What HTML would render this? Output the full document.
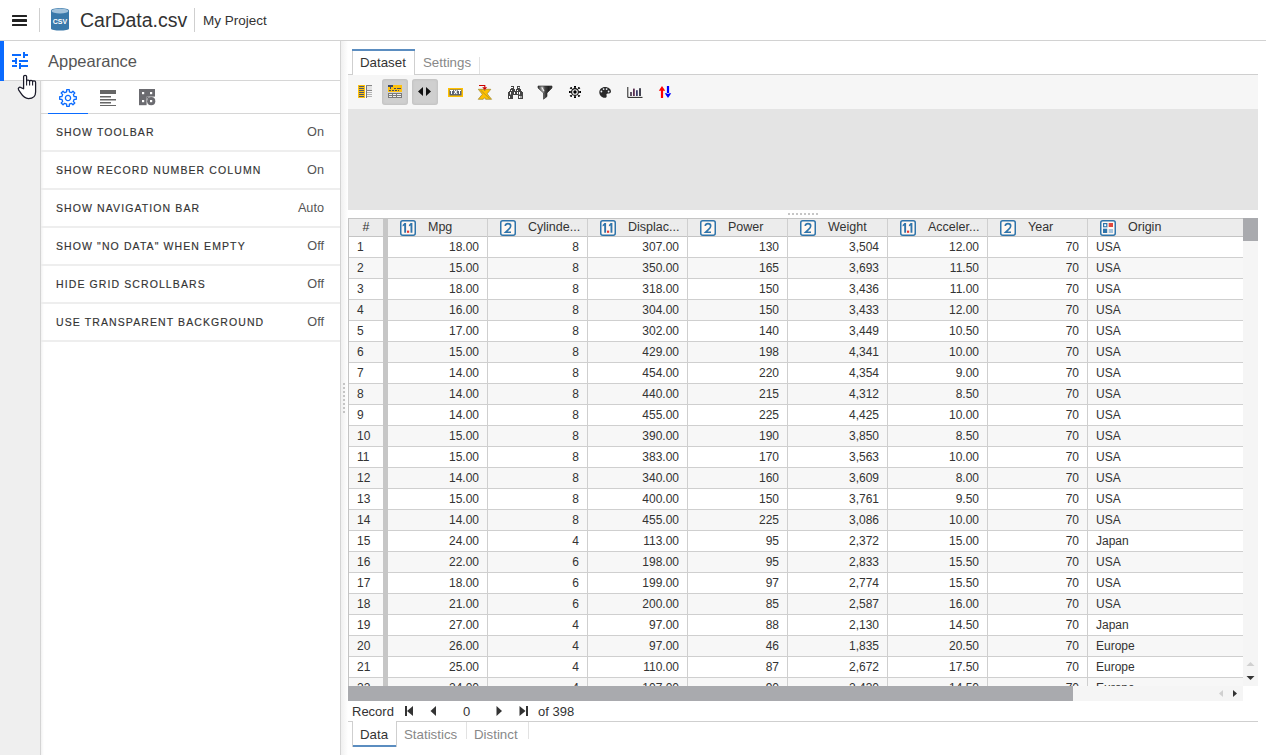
<!DOCTYPE html>
<html><head><meta charset="utf-8">
<style>
*{box-sizing:border-box;margin:0;padding:0}
html,body{width:1266px;height:755px;overflow:hidden;background:#fff;font-family:"Liberation Sans",sans-serif;color:#333}
.abs{position:absolute}
.ham{left:12px;height:2.4px;width:15px;background:#222;border-radius:0.5px}
.vsep{width:1px;background:#cfcfcf}
#title{left:80px;top:8px;font-size:19.5px;line-height:24px;color:#333;white-space:nowrap}
#proj{left:203px;top:13px;font-size:13.5px;line-height:16px;color:#333;white-space:nowrap}
#apptitle{left:48px;top:51px;font-size:16.5px;line-height:20px;color:#555;white-space:nowrap}
.hline{height:1px;background:#d6d6d6}
.srow{left:41px;width:299px;height:38px;border-bottom:2px solid #eeeeee}
.slab{position:absolute;left:15px;top:11px;font-size:10.5px;line-height:14px;letter-spacing:1.1px;color:#333;white-space:nowrap;-webkit-text-stroke:0.15px #333}
.sval{position:absolute;right:16px;top:11px;font-size:12.7px;line-height:15px;color:#555}
.tb{position:absolute;top:79px;width:26px;height:26px}
.tb.on{background:#cfcfcf;border-radius:3px;box-shadow:inset 0 0 3px rgba(0,0,0,.12)}
.tb svg{position:absolute;left:0;top:0}
.hl{left:349px;width:894px;height:1px;background:#cfcfcf}
.cn{left:357px;font-size:12px;line-height:20px;height:20px;color:#333}
.cr{width:91px;text-align:right;font-size:12px;line-height:20px;height:20px;color:#333;white-space:nowrap}
.cl{left:1096px;font-size:12px;line-height:20px;height:20px;color:#333;white-space:nowrap}
.hd{top:219px;font-size:12.5px;line-height:17px;color:#333;white-space:nowrap}
.nav{top:704px;font-size:13px;line-height:16px;color:#333;white-space:nowrap}
</style></head><body>
<!-- header -->
<div class="abs" style="left:0;top:40px;width:1266px;height:1px;background:#d2d2d2"></div>
<div class="abs ham" style="top:15px"></div>
<div class="abs ham" style="top:19.4px"></div>
<div class="abs ham" style="top:24px"></div>
<div class="abs vsep" style="left:39px;top:8px;height:24px"></div>
<svg class="abs" style="left:50px;top:8px" width="20" height="24" viewBox="0 0 20 24">
<path d="M1 2.8 C1 -0.8,19 -0.8,19 2.8 V20.5 C19 23.2,1 23.2,1 20.5Z" fill="#3a79aa"/>
<ellipse cx="10" cy="3" rx="8.4" ry="2.4" fill="#a3c3dc"/>
<text x="10" y="16" font-family="Liberation Sans" font-size="7" font-weight="bold" fill="#fff" text-anchor="middle">CSV</text>
</svg>
<div id="title" class="abs">CarData.csv</div>
<div class="abs vsep" style="left:194px;top:8px;height:24px"></div>
<div id="proj" class="abs">My Project</div>

<!-- left rail -->
<div class="abs" style="left:0;top:81px;width:40px;height:674px;background:#efefef"></div>
<svg class="abs" style="left:0;top:41px" width="40" height="40" viewBox="0 0 40 40">
<g fill="#0a6bff">
<rect x="12" y="13" width="9" height="2"/><rect x="23" y="11" width="2" height="6"/><rect x="25" y="13" width="3" height="2"/>
<rect x="12" y="19" width="3" height="2"/><rect x="15" y="17" width="2" height="6"/><rect x="19" y="19" width="9" height="2"/>
<rect x="12" y="24" width="5" height="2"/><rect x="19" y="22" width="2" height="6"/><rect x="19" y="24" width="9" height="2"/>
</g></svg>

<!-- panel -->
<div class="abs" style="left:40px;top:81px;width:1px;height:674px;background:#d4d4d4"></div>
<div class="abs" style="left:41px;top:81px;width:3px;height:674px;background:linear-gradient(to right,rgba(0,0,0,.05),rgba(0,0,0,0))"></div>
<div id="apptitle" class="abs">Appearance</div>
<div class="abs hline" style="left:0;top:80px;width:340px"></div>
<div class="abs" style="left:0;top:41px;width:4px;height:40px;background:#0a6bff"></div>
<div class="abs hline" style="left:41px;top:113px;width:299px"></div>
<div class="abs" style="left:48px;top:112.6px;width:40px;height:1.5px;background:#0a6bff"></div>
<!-- panel tab icons -->
<svg class="abs" style="left:58px;top:88px" width="20" height="20" viewBox="-10 -10 20 20">
<path fill="none" stroke="#0a6bff" stroke-width="1.3" stroke-linejoin="round" d="M-1.37 -6.15 L-1.31 -8.30 L1.31 -8.30 L1.37 -6.15 L3.38 -5.32 L4.94 -6.80 L6.80 -4.94 L5.32 -3.38 L6.15 -1.37 L8.30 -1.31 L8.30 1.31 L6.15 1.37 L5.32 3.38 L6.80 4.94 L4.94 6.80 L3.38 5.32 L1.37 6.15 L1.31 8.30 L-1.31 8.30 L-1.37 6.15 L-3.38 5.32 L-4.94 6.80 L-6.80 4.94 L-5.32 3.38 L-6.15 1.37 L-8.30 1.31 L-8.30 -1.31 L-6.15 -1.37 L-5.32 -3.38 L-6.80 -4.94 L-4.94 -6.80 L-3.38 -5.32Z"/>
<circle cx="0" cy="0" r="2.6" fill="none" stroke="#0a6bff" stroke-width="1.3"/>
</svg>
<svg class="abs" style="left:100px;top:90px" width="16" height="16" viewBox="0 0 16 16">
<g fill="#666"><rect x="0" y="0" width="16" height="4"/><rect x="0" y="6" width="11" height="1.5"/><rect x="0" y="9" width="16" height="1.5"/><rect x="0" y="12" width="11" height="1.5"/><rect x="0" y="15" width="16" height="1.5"/></g>
</svg>
<svg class="abs" style="left:139px;top:89px" width="17" height="17" viewBox="0 0 17 17">
<g fill="#6b6b70"><rect x="0" y="0" width="16" height="7.6"/><rect x="0" y="0" width="7.6" height="16.2"/><circle cx="12.2" cy="12.2" r="4.1"/><rect x="7.6" y="7.6" width="2" height="2"/></g>
<g fill="#fff"><rect x="3" y="3" width="2.2" height="2.2"/><rect x="11" y="3" width="2.2" height="2.2"/><rect x="3" y="11" width="2.2" height="2.2"/><rect x="11" y="11" width="2.2" height="2.2"/></g>
</svg>

<div class="abs srow" style="top:114px"><span class="slab">SHOW TOOLBAR</span><span class="sval">On</span></div>
<div class="abs srow" style="top:152px"><span class="slab">SHOW RECORD NUMBER COLUMN</span><span class="sval">On</span></div>
<div class="abs srow" style="top:190px"><span class="slab">SHOW NAVIGATION BAR</span><span class="sval">Auto</span></div>
<div class="abs srow" style="top:228px"><span class="slab">SHOW "NO DATA" WHEN EMPTY</span><span class="sval">Off</span></div>
<div class="abs srow" style="top:266px"><span class="slab">HIDE GRID SCROLLBARS</span><span class="sval">Off</span></div>
<div class="abs srow" style="top:304px"><span class="slab">USE TRANSPARENT BACKGROUND</span><span class="sval">Off</span></div>

<!-- splitter -->
<div class="abs" style="left:340px;top:41px;width:1px;height:714px;background:#d4d4d4"></div>
<div class="abs" style="left:341px;top:41px;width:7px;height:714px;background:linear-gradient(to right,#f0f0f0,#fff)"></div>
<svg class="abs" style="left:343px;top:383px" width="2" height="32"><g fill="#c4c4c4"><rect y="0" width="2" height="2"/><rect y="4" width="2" height="2"/><rect y="8" width="2" height="2"/><rect y="12" width="2" height="2"/><rect y="16" width="2" height="2"/><rect y="20" width="2" height="2"/><rect y="24" width="2" height="2"/><rect y="28" width="2" height="2"/></g></svg>

<!-- right tabs -->
<div class="abs" style="left:348px;top:74px;width:910px;height:1px;background:#cfcfcf"></div>
<div class="abs" style="left:352px;top:49px;width:63px;height:26px;background:#fff;border-left:1px solid #cfcfcf;border-right:1px solid #cfcfcf"></div>
<div class="abs" style="left:352px;top:49px;width:63px;height:2px;background:#5b8dc0"></div>
<div class="abs" style="left:360px;top:55px;font-size:13.3px;line-height:16px;color:#333">Dataset</div>
<div class="abs" style="left:423px;top:55px;font-size:13.3px;line-height:16px;color:#888">Settings</div>
<div class="abs" style="left:479px;top:57px;width:1px;height:17px;background:#e2e2e2"></div>

<!-- toolbar -->
<div class="abs" style="left:348px;top:75px;width:910px;height:34px;background:#f6f6f6"></div>
<div class="abs" style="left:348px;top:109px;width:910px;height:101px;background:#e4e4e4"></div>
<div class="tb on" style="left:382px"></div>
<div class="tb on" style="left:412px"></div>
<svg class="abs" style="left:348px;top:75px" width="340" height="34" viewBox="348 75 340 34" shape-rendering="crispEdges">
<rect x="358" y="85" width="7" height="13" fill="#ffc20e"/>
<rect x="359" y="86" width="5" height="1" fill="#4b5770"/>
<rect x="359" y="88" width="5" height="1" fill="#4b5770"/>
<rect x="359" y="90" width="5" height="1" fill="#4b5770"/>
<rect x="359" y="92" width="5" height="1" fill="#4b5770"/>
<rect x="359" y="94" width="5" height="1" fill="#4b5770"/>
<rect x="359" y="96" width="5" height="1" fill="#4b5770"/>
<rect x="367" y="86" width="5" height="4" fill="#e2e2e2"/>
<rect x="366" y="85" width="1" height="13" fill="#777"/>
<rect x="366" y="85" width="6" height="1" fill="#888"/>
<rect x="366" y="90" width="6" height="1" fill="#888"/>
<rect x="367" y="92" width="5" height="1" fill="#b4b4b4"/>
<rect x="367" y="94" width="5" height="1" fill="#b4b4b4"/>
<rect x="367" y="96" width="5" height="1" fill="#b4b4b4"/>
<rect x="388" y="85" width="14" height="7" fill="#ffc20e"/>
<rect x="388" y="85" width="5" height="1.5" fill="#3f4a66"/><rect x="389.5" y="85" width="1.5" height="4" fill="#3f4a66"/>
<rect x="394" y="88" width="2" height="1" fill="#3f4a66"/>
<rect x="397" y="88" width="4" height="1" fill="#3f4a66"/>
<rect x="389" y="90" width="2" height="1" fill="#3f4a66"/>
<rect x="392" y="90" width="1.5" height="1" fill="#3f4a66"/>
<rect x="394.5" y="90" width="2" height="1" fill="#3f4a66"/>
<rect x="398" y="90" width="1" height="1" fill="#3f4a66"/>
<rect x="388" y="93" width="14" height="5" fill="#7a7a7a"/>
<rect x="389" y="94" width="3" height="1" fill="#eee"/>
<rect x="393" y="94" width="3" height="1" fill="#eee"/>
<rect x="397" y="94" width="4" height="1" fill="#eee"/>
<rect x="389" y="96" width="3" height="1" fill="#eee"/>
<rect x="393" y="96" width="3" height="1" fill="#eee"/>
<rect x="397" y="96" width="4" height="1" fill="#eee"/>
</svg>
<svg class="abs" style="left:348px;top:75px" width="340" height="34" viewBox="348 75 340 34">
<path d="M423 87 V96 L418 91.5Z M426 87 V96 L431 91.5Z" fill="#111"/>
<rect x="448" y="88" width="15" height="9" fill="#ffc000"/><rect x="449.5" y="89.5" width="12" height="6" fill="#5b6270"/>
<g fill="#fff" shape-rendering="crispEdges"><rect x="450" y="90" width="3.4" height="1.2"/><rect x="451.1" y="90" width="1.3" height="4"/><rect x="457.6" y="90" width="3.4" height="1.2"/><rect x="458.7" y="90" width="1.3" height="4"/></g><path d="M454.2 90.1 L457.2 94 M457.2 90.1 L454.2 94" stroke="#fff" stroke-width="1.1"/>
<path d="M478.3 89.3 H484 L484.7 91 L485.5 89.3 H490.8 L487.2 93.8 L491.6 99.3 H485.6 L484.6 97.6 L483.2 99.3 H478.2 L482.3 94.3 Z" fill="#ffc000" stroke="#9a8530" stroke-width="0.7"/>
<path d="M480.6 90.2 L489.6 98.6" stroke="#9a8530" stroke-width="0.7"/>
<path d="M479 85.5 H484.8 V87.5" fill="none" stroke="#cc0000" stroke-width="1.1"/><path d="M482.2 87.3 H487.2 L484.7 90Z" fill="#cc0000"/>
<g fill="#454545" shape-rendering="crispEdges"><rect x="511" y="86" width="3" height="3"/><rect x="517" y="86" width="3" height="3"/><rect x="510" y="89" width="5" height="3"/><rect x="516" y="89" width="5" height="3"/><rect x="508" y="92" width="5" height="7"/><rect x="518" y="92" width="5" height="7"/><rect x="509" y="91" width="1" height="1"/><rect x="521" y="91" width="1" height="1"/><rect x="513" y="91" width="5" height="4"/></g>
<g fill="#fff" shape-rendering="crispEdges"><rect x="512" y="87" width="1" height="1"/><rect x="518" y="87" width="1" height="1"/><rect x="511" y="90" width="1" height="1"/><rect x="517" y="90" width="1" height="1"/><rect x="510" y="92" width="1" height="2"/><rect x="517" y="92" width="1" height="2"/><rect x="514" y="92" width="1" height="2"/><rect x="509" y="96" width="1" height="2"/><rect x="519" y="96" width="1" height="2"/></g>
<g fill="#fff"><rect x="511" y="87" width="1" height="1"/><rect x="518.5" y="87" width="1" height="1"/><rect x="510" y="92" width="1" height="2.5"/><rect x="519" y="92" width="1" height="2.5"/><rect x="509" y="96" width="1" height="2"/><rect x="520.5" y="96" width="1" height="2"/></g>
<defs><linearGradient id="fg" x1="0" x2="1"><stop offset="0" stop-color="#333"/><stop offset="0.3" stop-color="#aaa"/><stop offset="0.5" stop-color="#444"/><stop offset="0.75" stop-color="#222"/><stop offset="1" stop-color="#444"/></linearGradient></defs>
<path d="M538 86 H552 V88 L547 93 V96.5 L543.5 99.2 V93 L538 88Z" fill="url(#fg)" stroke="#222" stroke-width="0.6"/><path d="M541.3 87.4 L543.6 91.6 L544.5 91 L542.6 87.4Z" fill="#f4f4f4"/>
<g transform="translate(575 92)" fill="#000"><circle r="3.4" fill="none" stroke="#000" stroke-width="1.1"/><circle r="1.7"/><rect x="-1" y="-6" width="2" height="1.8"/><rect x="-1" y="4.2" width="2" height="1.8"/><rect x="-6" y="-1" width="1.8" height="2"/><rect x="4.2" y="-1" width="1.8" height="2"/><path d="M-3.8 -4.8 L-3.1 -3.8 L-3.8 -3.1 L-4.8 -3.8 Z M3.8 -4.8 L3.1 -3.8 L3.8 -3.1 L4.8 -3.8 Z M-3.8 4.8 L-3.1 3.8 L-3.8 3.1 L-4.8 3.8 Z M3.8 4.8 L3.1 3.8 L3.8 3.1 L4.8 3.8 Z" stroke="#000" stroke-width="0.9" stroke-linejoin="round"/></g>
<path d="M605 87 C608.6 87 611 89.2 611 91.5 C611 93.3 609.3 93.6 607.8 93.6 C606.6 93.6 606.2 94.4 606.6 95.4 C607 96.8 606.2 97.8 604.8 97.8 C601.6 97.8 599.3 95.2 599.3 92.3 C599.3 89.3 601.8 87 605 87Z" fill="#2a2a2a"/>
<g fill="#f0f4fa"><circle cx="601.4" cy="91.5" r="0.9"/><circle cx="603.6" cy="89.1" r="0.9"/><circle cx="606.6" cy="89.1" r="0.9"/><circle cx="608.6" cy="91.5" r="0.9"/></g>
<path d="M627.8 87 V97.4 H642.5" fill="none" stroke="#222" stroke-width="1"/>
<rect x="630.2" y="92" width="1.6" height="4" fill="#3a2a40"/><rect x="633.1" y="88.6" width="1.6" height="7.4" fill="#4a1a40"/><rect x="636.1" y="90.2" width="1.6" height="5.8" fill="#2a2a5a"/><rect x="639.2" y="88.2" width="1.6" height="7.8" fill="#1a1a2a"/>
<path d="M660.9 90 H663.1 V98 H660.9Z M658.8 90.8 L662 86 L665.2 90.8Z" fill="#ff0000"/>
<path d="M666.9 86 H669.1 V94 H666.9Z M664.8 93.2 L668 98 L671.2 93.2Z" fill="#0000ff"/>
</svg>

<div class="abs" style="left:349px;top:219px;width:894px;height:17px;background:#ececec"></div>
<div class="abs" style="left:349px;top:237px;width:894px;height:20px;background:#fff"></div>
<div class="abs hl" style="top:257px"></div>
<div class="abs cn" style="top:237px">1</div>
<div class="abs cr" style="top:237px;left:388px">18.00</div>
<div class="abs cr" style="top:237px;left:488px">8</div>
<div class="abs cr" style="top:237px;left:588px">307.00</div>
<div class="abs cr" style="top:237px;left:688px">130</div>
<div class="abs cr" style="top:237px;left:788px">3,504</div>
<div class="abs cr" style="top:237px;left:888px">12.00</div>
<div class="abs cr" style="top:237px;left:988px">70</div>
<div class="abs cl" style="top:237px;left:1096px">USA</div>
<div class="abs" style="left:349px;top:258px;width:894px;height:20px;background:#f7f7f7"></div>
<div class="abs hl" style="top:278px"></div>
<div class="abs cn" style="top:258px">2</div>
<div class="abs cr" style="top:258px;left:388px">15.00</div>
<div class="abs cr" style="top:258px;left:488px">8</div>
<div class="abs cr" style="top:258px;left:588px">350.00</div>
<div class="abs cr" style="top:258px;left:688px">165</div>
<div class="abs cr" style="top:258px;left:788px">3,693</div>
<div class="abs cr" style="top:258px;left:888px">11.50</div>
<div class="abs cr" style="top:258px;left:988px">70</div>
<div class="abs cl" style="top:258px;left:1096px">USA</div>
<div class="abs" style="left:349px;top:279px;width:894px;height:20px;background:#fff"></div>
<div class="abs hl" style="top:299px"></div>
<div class="abs cn" style="top:279px">3</div>
<div class="abs cr" style="top:279px;left:388px">18.00</div>
<div class="abs cr" style="top:279px;left:488px">8</div>
<div class="abs cr" style="top:279px;left:588px">318.00</div>
<div class="abs cr" style="top:279px;left:688px">150</div>
<div class="abs cr" style="top:279px;left:788px">3,436</div>
<div class="abs cr" style="top:279px;left:888px">11.00</div>
<div class="abs cr" style="top:279px;left:988px">70</div>
<div class="abs cl" style="top:279px;left:1096px">USA</div>
<div class="abs" style="left:349px;top:300px;width:894px;height:20px;background:#f7f7f7"></div>
<div class="abs hl" style="top:320px"></div>
<div class="abs cn" style="top:300px">4</div>
<div class="abs cr" style="top:300px;left:388px">16.00</div>
<div class="abs cr" style="top:300px;left:488px">8</div>
<div class="abs cr" style="top:300px;left:588px">304.00</div>
<div class="abs cr" style="top:300px;left:688px">150</div>
<div class="abs cr" style="top:300px;left:788px">3,433</div>
<div class="abs cr" style="top:300px;left:888px">12.00</div>
<div class="abs cr" style="top:300px;left:988px">70</div>
<div class="abs cl" style="top:300px;left:1096px">USA</div>
<div class="abs" style="left:349px;top:321px;width:894px;height:20px;background:#fff"></div>
<div class="abs hl" style="top:341px"></div>
<div class="abs cn" style="top:321px">5</div>
<div class="abs cr" style="top:321px;left:388px">17.00</div>
<div class="abs cr" style="top:321px;left:488px">8</div>
<div class="abs cr" style="top:321px;left:588px">302.00</div>
<div class="abs cr" style="top:321px;left:688px">140</div>
<div class="abs cr" style="top:321px;left:788px">3,449</div>
<div class="abs cr" style="top:321px;left:888px">10.50</div>
<div class="abs cr" style="top:321px;left:988px">70</div>
<div class="abs cl" style="top:321px;left:1096px">USA</div>
<div class="abs" style="left:349px;top:342px;width:894px;height:20px;background:#f7f7f7"></div>
<div class="abs hl" style="top:362px"></div>
<div class="abs cn" style="top:342px">6</div>
<div class="abs cr" style="top:342px;left:388px">15.00</div>
<div class="abs cr" style="top:342px;left:488px">8</div>
<div class="abs cr" style="top:342px;left:588px">429.00</div>
<div class="abs cr" style="top:342px;left:688px">198</div>
<div class="abs cr" style="top:342px;left:788px">4,341</div>
<div class="abs cr" style="top:342px;left:888px">10.00</div>
<div class="abs cr" style="top:342px;left:988px">70</div>
<div class="abs cl" style="top:342px;left:1096px">USA</div>
<div class="abs" style="left:349px;top:363px;width:894px;height:20px;background:#fff"></div>
<div class="abs hl" style="top:383px"></div>
<div class="abs cn" style="top:363px">7</div>
<div class="abs cr" style="top:363px;left:388px">14.00</div>
<div class="abs cr" style="top:363px;left:488px">8</div>
<div class="abs cr" style="top:363px;left:588px">454.00</div>
<div class="abs cr" style="top:363px;left:688px">220</div>
<div class="abs cr" style="top:363px;left:788px">4,354</div>
<div class="abs cr" style="top:363px;left:888px">9.00</div>
<div class="abs cr" style="top:363px;left:988px">70</div>
<div class="abs cl" style="top:363px;left:1096px">USA</div>
<div class="abs" style="left:349px;top:384px;width:894px;height:20px;background:#f7f7f7"></div>
<div class="abs hl" style="top:404px"></div>
<div class="abs cn" style="top:384px">8</div>
<div class="abs cr" style="top:384px;left:388px">14.00</div>
<div class="abs cr" style="top:384px;left:488px">8</div>
<div class="abs cr" style="top:384px;left:588px">440.00</div>
<div class="abs cr" style="top:384px;left:688px">215</div>
<div class="abs cr" style="top:384px;left:788px">4,312</div>
<div class="abs cr" style="top:384px;left:888px">8.50</div>
<div class="abs cr" style="top:384px;left:988px">70</div>
<div class="abs cl" style="top:384px;left:1096px">USA</div>
<div class="abs" style="left:349px;top:405px;width:894px;height:20px;background:#fff"></div>
<div class="abs hl" style="top:425px"></div>
<div class="abs cn" style="top:405px">9</div>
<div class="abs cr" style="top:405px;left:388px">14.00</div>
<div class="abs cr" style="top:405px;left:488px">8</div>
<div class="abs cr" style="top:405px;left:588px">455.00</div>
<div class="abs cr" style="top:405px;left:688px">225</div>
<div class="abs cr" style="top:405px;left:788px">4,425</div>
<div class="abs cr" style="top:405px;left:888px">10.00</div>
<div class="abs cr" style="top:405px;left:988px">70</div>
<div class="abs cl" style="top:405px;left:1096px">USA</div>
<div class="abs" style="left:349px;top:426px;width:894px;height:20px;background:#f7f7f7"></div>
<div class="abs hl" style="top:446px"></div>
<div class="abs cn" style="top:426px">10</div>
<div class="abs cr" style="top:426px;left:388px">15.00</div>
<div class="abs cr" style="top:426px;left:488px">8</div>
<div class="abs cr" style="top:426px;left:588px">390.00</div>
<div class="abs cr" style="top:426px;left:688px">190</div>
<div class="abs cr" style="top:426px;left:788px">3,850</div>
<div class="abs cr" style="top:426px;left:888px">8.50</div>
<div class="abs cr" style="top:426px;left:988px">70</div>
<div class="abs cl" style="top:426px;left:1096px">USA</div>
<div class="abs" style="left:349px;top:447px;width:894px;height:20px;background:#fff"></div>
<div class="abs hl" style="top:467px"></div>
<div class="abs cn" style="top:447px">11</div>
<div class="abs cr" style="top:447px;left:388px">15.00</div>
<div class="abs cr" style="top:447px;left:488px">8</div>
<div class="abs cr" style="top:447px;left:588px">383.00</div>
<div class="abs cr" style="top:447px;left:688px">170</div>
<div class="abs cr" style="top:447px;left:788px">3,563</div>
<div class="abs cr" style="top:447px;left:888px">10.00</div>
<div class="abs cr" style="top:447px;left:988px">70</div>
<div class="abs cl" style="top:447px;left:1096px">USA</div>
<div class="abs" style="left:349px;top:468px;width:894px;height:20px;background:#f7f7f7"></div>
<div class="abs hl" style="top:488px"></div>
<div class="abs cn" style="top:468px">12</div>
<div class="abs cr" style="top:468px;left:388px">14.00</div>
<div class="abs cr" style="top:468px;left:488px">8</div>
<div class="abs cr" style="top:468px;left:588px">340.00</div>
<div class="abs cr" style="top:468px;left:688px">160</div>
<div class="abs cr" style="top:468px;left:788px">3,609</div>
<div class="abs cr" style="top:468px;left:888px">8.00</div>
<div class="abs cr" style="top:468px;left:988px">70</div>
<div class="abs cl" style="top:468px;left:1096px">USA</div>
<div class="abs" style="left:349px;top:489px;width:894px;height:20px;background:#fff"></div>
<div class="abs hl" style="top:509px"></div>
<div class="abs cn" style="top:489px">13</div>
<div class="abs cr" style="top:489px;left:388px">15.00</div>
<div class="abs cr" style="top:489px;left:488px">8</div>
<div class="abs cr" style="top:489px;left:588px">400.00</div>
<div class="abs cr" style="top:489px;left:688px">150</div>
<div class="abs cr" style="top:489px;left:788px">3,761</div>
<div class="abs cr" style="top:489px;left:888px">9.50</div>
<div class="abs cr" style="top:489px;left:988px">70</div>
<div class="abs cl" style="top:489px;left:1096px">USA</div>
<div class="abs" style="left:349px;top:510px;width:894px;height:20px;background:#f7f7f7"></div>
<div class="abs hl" style="top:530px"></div>
<div class="abs cn" style="top:510px">14</div>
<div class="abs cr" style="top:510px;left:388px">14.00</div>
<div class="abs cr" style="top:510px;left:488px">8</div>
<div class="abs cr" style="top:510px;left:588px">455.00</div>
<div class="abs cr" style="top:510px;left:688px">225</div>
<div class="abs cr" style="top:510px;left:788px">3,086</div>
<div class="abs cr" style="top:510px;left:888px">10.00</div>
<div class="abs cr" style="top:510px;left:988px">70</div>
<div class="abs cl" style="top:510px;left:1096px">USA</div>
<div class="abs" style="left:349px;top:531px;width:894px;height:20px;background:#fff"></div>
<div class="abs hl" style="top:551px"></div>
<div class="abs cn" style="top:531px">15</div>
<div class="abs cr" style="top:531px;left:388px">24.00</div>
<div class="abs cr" style="top:531px;left:488px">4</div>
<div class="abs cr" style="top:531px;left:588px">113.00</div>
<div class="abs cr" style="top:531px;left:688px">95</div>
<div class="abs cr" style="top:531px;left:788px">2,372</div>
<div class="abs cr" style="top:531px;left:888px">15.00</div>
<div class="abs cr" style="top:531px;left:988px">70</div>
<div class="abs cl" style="top:531px;left:1096px">Japan</div>
<div class="abs" style="left:349px;top:552px;width:894px;height:20px;background:#f7f7f7"></div>
<div class="abs hl" style="top:572px"></div>
<div class="abs cn" style="top:552px">16</div>
<div class="abs cr" style="top:552px;left:388px">22.00</div>
<div class="abs cr" style="top:552px;left:488px">6</div>
<div class="abs cr" style="top:552px;left:588px">198.00</div>
<div class="abs cr" style="top:552px;left:688px">95</div>
<div class="abs cr" style="top:552px;left:788px">2,833</div>
<div class="abs cr" style="top:552px;left:888px">15.50</div>
<div class="abs cr" style="top:552px;left:988px">70</div>
<div class="abs cl" style="top:552px;left:1096px">USA</div>
<div class="abs" style="left:349px;top:573px;width:894px;height:20px;background:#fff"></div>
<div class="abs hl" style="top:593px"></div>
<div class="abs cn" style="top:573px">17</div>
<div class="abs cr" style="top:573px;left:388px">18.00</div>
<div class="abs cr" style="top:573px;left:488px">6</div>
<div class="abs cr" style="top:573px;left:588px">199.00</div>
<div class="abs cr" style="top:573px;left:688px">97</div>
<div class="abs cr" style="top:573px;left:788px">2,774</div>
<div class="abs cr" style="top:573px;left:888px">15.50</div>
<div class="abs cr" style="top:573px;left:988px">70</div>
<div class="abs cl" style="top:573px;left:1096px">USA</div>
<div class="abs" style="left:349px;top:594px;width:894px;height:20px;background:#f7f7f7"></div>
<div class="abs hl" style="top:614px"></div>
<div class="abs cn" style="top:594px">18</div>
<div class="abs cr" style="top:594px;left:388px">21.00</div>
<div class="abs cr" style="top:594px;left:488px">6</div>
<div class="abs cr" style="top:594px;left:588px">200.00</div>
<div class="abs cr" style="top:594px;left:688px">85</div>
<div class="abs cr" style="top:594px;left:788px">2,587</div>
<div class="abs cr" style="top:594px;left:888px">16.00</div>
<div class="abs cr" style="top:594px;left:988px">70</div>
<div class="abs cl" style="top:594px;left:1096px">USA</div>
<div class="abs" style="left:349px;top:615px;width:894px;height:20px;background:#fff"></div>
<div class="abs hl" style="top:635px"></div>
<div class="abs cn" style="top:615px">19</div>
<div class="abs cr" style="top:615px;left:388px">27.00</div>
<div class="abs cr" style="top:615px;left:488px">4</div>
<div class="abs cr" style="top:615px;left:588px">97.00</div>
<div class="abs cr" style="top:615px;left:688px">88</div>
<div class="abs cr" style="top:615px;left:788px">2,130</div>
<div class="abs cr" style="top:615px;left:888px">14.50</div>
<div class="abs cr" style="top:615px;left:988px">70</div>
<div class="abs cl" style="top:615px;left:1096px">Japan</div>
<div class="abs" style="left:349px;top:636px;width:894px;height:20px;background:#f7f7f7"></div>
<div class="abs hl" style="top:656px"></div>
<div class="abs cn" style="top:636px">20</div>
<div class="abs cr" style="top:636px;left:388px">26.00</div>
<div class="abs cr" style="top:636px;left:488px">4</div>
<div class="abs cr" style="top:636px;left:588px">97.00</div>
<div class="abs cr" style="top:636px;left:688px">46</div>
<div class="abs cr" style="top:636px;left:788px">1,835</div>
<div class="abs cr" style="top:636px;left:888px">20.50</div>
<div class="abs cr" style="top:636px;left:988px">70</div>
<div class="abs cl" style="top:636px;left:1096px">Europe</div>
<div class="abs" style="left:349px;top:657px;width:894px;height:20px;background:#fff"></div>
<div class="abs hl" style="top:677px"></div>
<div class="abs cn" style="top:657px">21</div>
<div class="abs cr" style="top:657px;left:388px">25.00</div>
<div class="abs cr" style="top:657px;left:488px">4</div>
<div class="abs cr" style="top:657px;left:588px">110.00</div>
<div class="abs cr" style="top:657px;left:688px">87</div>
<div class="abs cr" style="top:657px;left:788px">2,672</div>
<div class="abs cr" style="top:657px;left:888px">17.50</div>
<div class="abs cr" style="top:657px;left:988px">70</div>
<div class="abs cl" style="top:657px;left:1096px">Europe</div>
<div class="abs" style="left:349px;top:678px;width:894px;height:20px;background:#f7f7f7"></div>
<div class="abs hl" style="top:698px"></div>
<div class="abs cn" style="top:678px">22</div>
<div class="abs cr" style="top:678px;left:388px">24.00</div>
<div class="abs cr" style="top:678px;left:488px">4</div>
<div class="abs cr" style="top:678px;left:588px">107.00</div>
<div class="abs cr" style="top:678px;left:688px">90</div>
<div class="abs cr" style="top:678px;left:788px">2,430</div>
<div class="abs cr" style="top:678px;left:888px">14.50</div>
<div class="abs cr" style="top:678px;left:988px">70</div>
<div class="abs cl" style="top:678px;left:1096px">Europe</div>
<div class="abs" style="left:348px;top:218px;width:895px;height:1px;background:#c4c4c4"></div>
<div class="abs" style="left:348px;top:236px;width:895px;height:1px;background:#c4c4c4"></div>
<div class="abs" style="left:348px;top:218px;width:1px;height:468px;background:#c4c4c4"></div>
<div class="abs" style="left:487px;top:219px;width:1px;height:467px;background:#cfcfcf"></div>
<div class="abs" style="left:587px;top:219px;width:1px;height:467px;background:#cfcfcf"></div>
<div class="abs" style="left:687px;top:219px;width:1px;height:467px;background:#cfcfcf"></div>
<div class="abs" style="left:787px;top:219px;width:1px;height:467px;background:#cfcfcf"></div>
<div class="abs" style="left:887px;top:219px;width:1px;height:467px;background:#cfcfcf"></div>
<div class="abs" style="left:987px;top:219px;width:1px;height:467px;background:#cfcfcf"></div>
<div class="abs" style="left:1087px;top:219px;width:1px;height:467px;background:#cfcfcf"></div>
<div class="abs" style="left:383px;top:219px;width:5px;height:467px;background:#c6c6c6"></div>
<div class="abs hd" style="left:349px;width:34px;text-align:center">#</div>
<svg class="abs" style="left:400px;top:220px" width="16" height="16" viewBox="0 0 16 16"><rect x="0.75" y="0.75" width="14.5" height="14.5" rx="2" fill="#fff8f2" stroke="#2f74ab" stroke-width="1.5"/><path d="M2.6 5 L4.4 3 H6.1 V12.8 H4.2 V5.4 L2.6 6.4Z M8.9 5 L10.6 3 H12.4 V12.8 H10.5 V5.4 L8.9 6.4Z" fill="#2f74ab"/><rect x="7" y="10.6" width="2.2" height="2.2" fill="#e53935"/></svg>
<div class="abs hd" style="left:428px">Mpg</div>
<svg class="abs" style="left:500px;top:220px" width="16" height="16" viewBox="0 0 16 16"><rect x="0.75" y="0.75" width="14.5" height="14.5" rx="2" fill="#fff8f2" stroke="#2f74ab" stroke-width="1.5"/><path d="M5.2 6 C5.4 4.3,6.6 3.6,8 3.6 C9.6 3.6,10.7 4.6,10.7 6 C10.7 7.4,9.8 8.3,8.6 9.4 L5.6 12.2 H11" fill="none" stroke="#2f74ab" stroke-width="1.6"/></svg>
<div class="abs hd" style="left:528px">Cylinde...</div>
<svg class="abs" style="left:600px;top:220px" width="16" height="16" viewBox="0 0 16 16"><rect x="0.75" y="0.75" width="14.5" height="14.5" rx="2" fill="#fff8f2" stroke="#2f74ab" stroke-width="1.5"/><path d="M2.6 5 L4.4 3 H6.1 V12.8 H4.2 V5.4 L2.6 6.4Z M8.9 5 L10.6 3 H12.4 V12.8 H10.5 V5.4 L8.9 6.4Z" fill="#2f74ab"/><rect x="7" y="10.6" width="2.2" height="2.2" fill="#e53935"/></svg>
<div class="abs hd" style="left:628px">Displac...</div>
<svg class="abs" style="left:700px;top:220px" width="16" height="16" viewBox="0 0 16 16"><rect x="0.75" y="0.75" width="14.5" height="14.5" rx="2" fill="#fff8f2" stroke="#2f74ab" stroke-width="1.5"/><path d="M5.2 6 C5.4 4.3,6.6 3.6,8 3.6 C9.6 3.6,10.7 4.6,10.7 6 C10.7 7.4,9.8 8.3,8.6 9.4 L5.6 12.2 H11" fill="none" stroke="#2f74ab" stroke-width="1.6"/></svg>
<div class="abs hd" style="left:728px">Power</div>
<svg class="abs" style="left:800px;top:220px" width="16" height="16" viewBox="0 0 16 16"><rect x="0.75" y="0.75" width="14.5" height="14.5" rx="2" fill="#fff8f2" stroke="#2f74ab" stroke-width="1.5"/><path d="M5.2 6 C5.4 4.3,6.6 3.6,8 3.6 C9.6 3.6,10.7 4.6,10.7 6 C10.7 7.4,9.8 8.3,8.6 9.4 L5.6 12.2 H11" fill="none" stroke="#2f74ab" stroke-width="1.6"/></svg>
<div class="abs hd" style="left:828px">Weight</div>
<svg class="abs" style="left:900px;top:220px" width="16" height="16" viewBox="0 0 16 16"><rect x="0.75" y="0.75" width="14.5" height="14.5" rx="2" fill="#fff8f2" stroke="#2f74ab" stroke-width="1.5"/><path d="M2.6 5 L4.4 3 H6.1 V12.8 H4.2 V5.4 L2.6 6.4Z M8.9 5 L10.6 3 H12.4 V12.8 H10.5 V5.4 L8.9 6.4Z" fill="#2f74ab"/><rect x="7" y="10.6" width="2.2" height="2.2" fill="#e53935"/></svg>
<div class="abs hd" style="left:928px">Acceler...</div>
<svg class="abs" style="left:1000px;top:220px" width="16" height="16" viewBox="0 0 16 16"><rect x="0.75" y="0.75" width="14.5" height="14.5" rx="2" fill="#fff8f2" stroke="#2f74ab" stroke-width="1.5"/><path d="M5.2 6 C5.4 4.3,6.6 3.6,8 3.6 C9.6 3.6,10.7 4.6,10.7 6 C10.7 7.4,9.8 8.3,8.6 9.4 L5.6 12.2 H11" fill="none" stroke="#2f74ab" stroke-width="1.6"/></svg>
<div class="abs hd" style="left:1028px">Year</div>
<svg class="abs" style="left:1100px;top:220px" width="16" height="16" viewBox="0 0 16 16"><rect x="0.75" y="0.75" width="14.5" height="14.5" rx="2" fill="#fff8f2" stroke="#2f74ab" stroke-width="1.5"/><rect x="3.6" y="3.6" width="3.2" height="3.2" fill="#fff" stroke="#2f74ab" stroke-width="1.2"/><rect x="8.7" y="3" width="4.3" height="4" fill="#e0473d"/><rect x="3" y="7" width="4.2" height="2" fill="#b9d0e4"/><rect x="3" y="9" width="4.2" height="4" fill="#2f74ab"/><rect x="8.7" y="9" width="4.3" height="4" fill="#a7c4dd"/></svg>
<div class="abs hd" style="left:1128px">Origin</div>

<!-- scrollbars -->
<div class="abs" style="left:1243px;top:218px;width:15px;height:468px;background:#f5f5f5"></div>
<div class="abs" style="left:1243px;top:218px;width:15px;height:23px;background:#a9aaae"></div>
<svg class="abs" style="left:1243px;top:655px" width="15" height="30"><path d="M3.5 11 L7.5 7 L11.5 11Z" fill="#d0d0d0"/><path d="M3.5 21 L11.5 21 L7.5 25Z" fill="#333"/></svg>
<div class="abs" style="left:348px;top:686px;width:895px;height:15px;background:#f5f5f5"></div>
<div class="abs" style="left:348px;top:686px;width:725px;height:15px;background:#a9aaae"></div>
<svg class="abs" style="left:1210px;top:686px" width="33" height="15"><path d="M13 4 L9 7.5 L13 11Z" fill="#d0d0d0"/><path d="M23 4 L27 7.5 L23 11Z" fill="#333"/></svg>
<svg class="abs" style="left:788px;top:213px" width="30" height="2"><g fill="#c6c6c6"><rect x="0" y="0" width="2" height="2"/><rect x="4" y="0" width="2" height="2"/><rect x="8" y="0" width="2" height="2"/><rect x="12" y="0" width="2" height="2"/><rect x="16" y="0" width="2" height="2"/><rect x="20" y="0" width="2" height="2"/><rect x="24" y="0" width="2" height="2"/><rect x="28" y="0" width="2" height="2"/></g></svg>

<!-- nav -->
<div class="abs nav" style="left:352px">Record</div>
<svg class="abs" style="left:400px;top:704px" width="135" height="14">
<g fill="#333">
<rect x="5" y="2" width="2" height="10"/><path d="M13 2 V12 L7 7Z"/>
<path d="M36 2 V12 L30.5 7Z"/>
<path d="M96.5 2 V12 L102 7Z"/>
<path d="M119.5 2 V12 L125.5 7Z"/><rect x="126" y="2" width="2" height="10"/>
</g></svg>
<div class="abs nav" style="left:463px">0</div>
<div class="abs nav" style="left:538px">of 398</div>

<!-- bottom tabs -->
<div class="abs" style="left:348px;top:721px;width:910px;height:1px;background:#cfcfcf"></div>
<div class="abs" style="left:352px;top:721px;width:45px;height:26px;background:#fff;border-left:1px solid #cfcfcf;border-right:1px solid #cfcfcf"></div>
<div class="abs" style="left:353px;top:745px;width:43px;height:2px;background:#5b8dc0"></div>
<div class="abs" style="left:360px;top:727px;font-size:13.3px;line-height:16px;color:#333">Data</div>
<div class="abs" style="left:404px;top:727px;font-size:13.3px;line-height:16px;color:#888">Statistics</div>
<div class="abs" style="left:466px;top:722px;width:1px;height:17px;background:#e2e2e2"></div>
<div class="abs" style="left:474px;top:727px;font-size:13.3px;line-height:16px;color:#888">Distinct</div>
<div class="abs" style="left:528px;top:722px;width:1px;height:17px;background:#e2e2e2"></div>

<!-- cursor -->
<svg class="abs" style="left:14px;top:72px" width="26" height="28" viewBox="0 0 26 28">
<path d="M9.6 16.8 V4.6 C9.6 2.9,12.6 2.9,12.6 4.6 V9.2 C12.6 7.6,15.6 7.6,15.6 9.4 C15.6 8,18.6 8,18.6 9.8 C18.6 8.6,21.6 8.6,21.6 10.4 V20 C21.6 24.2,19 26.5,14.5 26.5 C11 26.5,9 24.6,7 21.4 L4.6 17.8 C3.6 16.3,5.4 14.5,7 15.6 Z" fill="#fff" stroke="#1b1b2a" stroke-width="1.25" stroke-linejoin="round"/>
<path d="M12.6 9 V13.6 M15.6 9.3 V13.6 M18.6 9.8 V13.6" stroke="#1b1b2a" stroke-width="1.1"/>
</svg>
</body></html>
